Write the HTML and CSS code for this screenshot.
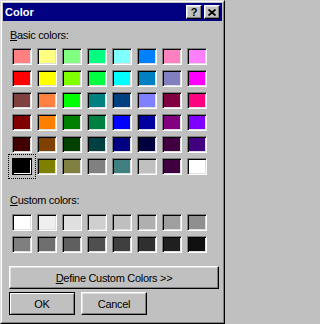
FILE: index.html
```html
<!DOCTYPE html>
<html>
<head>
<meta charset="utf-8">
<link rel="stylesheet" href="styles.css">
</head>
<body>
<div class="window">
  <div class="frame">
    <div class="titlebar">
      <span class="title">Color</span>
      <div class="tb-buttons">
        <span class="tb-btn help">?</span>
        <span class="tb-btn close"><svg width="8" height="7" viewBox="0 0 8 7"><path d="M0.5 0.5 L7.5 6.5 M7.5 0.5 L0.5 6.5" stroke="#000" stroke-width="1.7" fill="none"/></svg></span>
      </div>
    </div>
    <div class="content">
      <div class="label"><u>B</u>asic colors:</div>
      <div class="grid basic">
        <span class="sw" style="background:#ff8080"></span>
        <span class="sw" style="background:#ffff80"></span>
        <span class="sw" style="background:#80ff80"></span>
        <span class="sw" style="background:#00ff80"></span>
        <span class="sw" style="background:#80ffff"></span>
        <span class="sw" style="background:#0080ff"></span>
        <span class="sw" style="background:#ff80c0"></span>
        <span class="sw" style="background:#ff80ff"></span>

        <span class="sw" style="background:#ff0000"></span>
        <span class="sw" style="background:#ffff00"></span>
        <span class="sw" style="background:#80ff00"></span>
        <span class="sw" style="background:#00ff40"></span>
        <span class="sw" style="background:#00ffff"></span>
        <span class="sw" style="background:#0080c0"></span>
        <span class="sw" style="background:#8080c0"></span>
        <span class="sw" style="background:#ff00ff"></span>

        <span class="sw" style="background:#804040"></span>
        <span class="sw" style="background:#ff8040"></span>
        <span class="sw" style="background:#00ff00"></span>
        <span class="sw" style="background:#008080"></span>
        <span class="sw" style="background:#004080"></span>
        <span class="sw" style="background:#8080ff"></span>
        <span class="sw" style="background:#800040"></span>
        <span class="sw" style="background:#ff0080"></span>

        <span class="sw" style="background:#800000"></span>
        <span class="sw" style="background:#ff8000"></span>
        <span class="sw" style="background:#008000"></span>
        <span class="sw" style="background:#008040"></span>
        <span class="sw" style="background:#0000ff"></span>
        <span class="sw" style="background:#0000a0"></span>
        <span class="sw" style="background:#800080"></span>
        <span class="sw" style="background:#8000ff"></span>

        <span class="sw" style="background:#400000"></span>
        <span class="sw" style="background:#804000"></span>
        <span class="sw" style="background:#004000"></span>
        <span class="sw" style="background:#004040"></span>
        <span class="sw" style="background:#000080"></span>
        <span class="sw" style="background:#000040"></span>
        <span class="sw" style="background:#400040"></span>
        <span class="sw" style="background:#400080"></span>

        <span class="sw selected" style="background:#000000"></span>
        <span class="sw" style="background:#808000"></span>
        <span class="sw" style="background:#808040"></span>
        <span class="sw" style="background:#808080"></span>
        <span class="sw" style="background:#408080"></span>
        <span class="sw" style="background:#c0c0c0"></span>
        <span class="sw" style="background:#400040"></span>
        <span class="sw" style="background:#ffffff"></span>
      </div>
      <div class="label custom-label"><u>C</u>ustom colors:</div>
      <div class="grid custom">
        <span class="sw" style="background:#ffffff"></span>
        <span class="sw" style="background:#efefef"></span>
        <span class="sw" style="background:#dfdfdf"></span>
        <span class="sw" style="background:#cfcfcf"></span>
        <span class="sw" style="background:#bfbfbf"></span>
        <span class="sw" style="background:#afafaf"></span>
        <span class="sw" style="background:#9f9f9f"></span>
        <span class="sw" style="background:#8f8f8f"></span>

        <span class="sw" style="background:#7f7f7f"></span>
        <span class="sw" style="background:#6f6f6f"></span>
        <span class="sw" style="background:#5f5f5f"></span>
        <span class="sw" style="background:#4f4f4f"></span>
        <span class="sw" style="background:#3f3f3f"></span>
        <span class="sw" style="background:#2f2f2f"></span>
        <span class="sw" style="background:#1f1f1f"></span>
        <span class="sw" style="background:#0f0f0f"></span>
      </div>
      <button class="btn define"><u>D</u>efine Custom Colors &gt;&gt;</button>
      <div class="actions">
        <button class="btn default">OK</button>
        <button class="btn">Cancel</button>
      </div>
    </div>
  </div>
</div>
</body>
</html>
```

FILE: styles.css
```css
html, body {
  margin: 0;
  padding: 0;
  background: #c0c0c0;
}

body {
  width: 225px;
  height: 324px;
  overflow: hidden;
  font-family: "Liberation Sans", Arial, sans-serif;
  font-size: 11px;
  color: #000;
}

.window {
  box-sizing: border-box;
  width: 225px;
  height: 324px;
  border: 1px solid;
  border-color: #dfdfdf #000 #000 #dfdfdf;
  background: #c0c0c0;
}

.frame {
  box-sizing: border-box;
  height: 100%;
  border: 1px solid;
  border-color: #fff #808080 #808080 #fff;
  padding: 1px;
  display: flex;
  flex-direction: column;
}

.titlebar {
  height: 18px;
  flex: none;
  background: #000080;
  color: #fff;
  display: flex;
  align-items: center;
  justify-content: space-between;
  padding: 0 2px;
}

.title {
  font-weight: bold;
  font-size: 11px;
  line-height: 18px;
}

.tb-buttons {
  display: flex;
  gap: 2px;
}

.tb-btn {
  box-sizing: border-box;
  width: 16px;
  height: 14px;
  background: #c0c0c0;
  border: 1px solid;
  border-color: #fff #000 #000 #fff;
  box-shadow: inset -1px -1px #808080, inset 1px 1px #dfdfdf;
  display: flex;
  align-items: center;
  justify-content: center;
  color: #000;
  font-weight: bold;
  font-size: 11px;
  line-height: 12px;
}

.tb-btn svg {
  display: block;
}

.content {
  flex: 1;
  display: flex;
  flex-direction: column;
  align-items: flex-start;
  padding: 8px 0 0 6px;
}

.label {
  line-height: 13px;
  letter-spacing: -0.3px;
  padding-left: 1px;
}

.grid {
  display: grid;
  grid-template-columns: repeat(8, 20px);
  grid-auto-rows: 17px;
  column-gap: 5px;
  row-gap: 5px;
  margin-left: 3px;
  margin-top: 6px;
}

.custom-label {
  margin-top: 19px;
}

.grid.custom {
  margin-top: 7px;
}

.sw {
  box-sizing: border-box;
  display: block;
  width: 20px;
  height: 17px;
  border: 1px solid;
  border-color: #808080 #fff #fff #808080;
  box-shadow: inset 1px 1px #000, inset -1px -1px #dfdfdf;
}

.sw.selected {
  border-color: #000;
  box-shadow: inset 1px 1px #000, inset -1px -1px #fff;
  outline: 1px dotted #000;
  outline-offset: 3px;
}

.btn {
  box-sizing: border-box;
  height: 23px;
  padding: 0;
  margin: 0;
  font-family: inherit;
  font-size: 11px;
  letter-spacing: -0.3px;
  color: #000;
  background: #c0c0c0;
  border: 1px solid;
  border-color: #fff #000 #000 #fff;
  box-shadow: inset -1px -1px #808080, inset 1px 1px #dfdfdf;
  border-radius: 0;
}

.define {
  width: 210px;
  margin-top: 13px;
}

.actions {
  display: flex;
  gap: 6px;
  margin-top: 3px;
}

.actions .btn {
  width: 66px;
}

.btn.default {
  border-color: #000;
  box-shadow: inset 1px 1px #fff, inset -1px -1px #808080;
}
```
